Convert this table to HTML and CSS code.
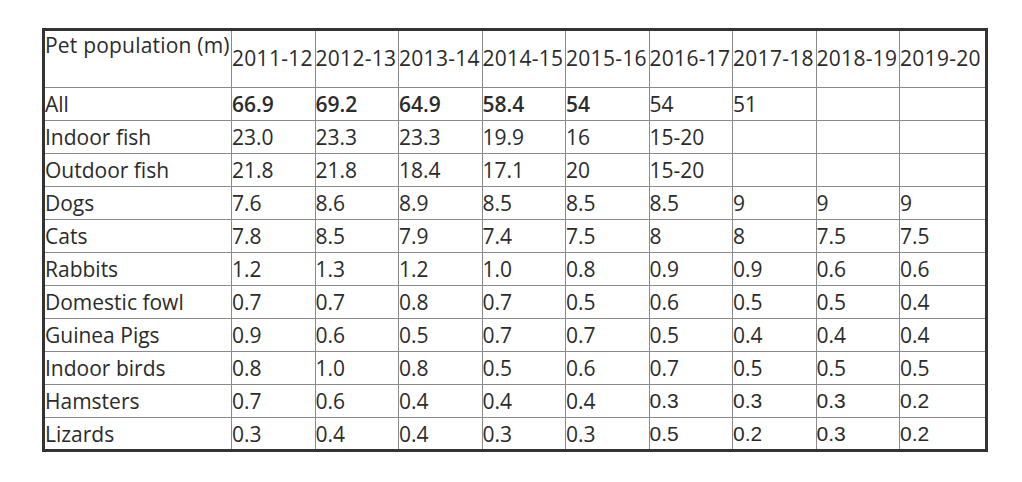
FILE: index.html
```html
<!DOCTYPE html>
<html lang="en">
<head>
    <meta charset="UTF-8">
    <title>Pet population</title>
    <link rel="stylesheet" href="styles.css">
</head>
<body>

    <!-- Pet population table -->
    <table class="pets">
        <colgroup>
            <col class="c-name">
            <col class="c-year"><col class="c-year"><col class="c-year">
            <col class="c-year"><col class="c-year"><col class="c-year">
            <col class="c-year"><col class="c-year"><col class="c-last">
        </colgroup>
        <tr class="head">
            <th class="title">Pet population (m)</th>
            <th>2011-12</th><th>2012-13</th><th>2013-14</th><th>2014-15</th><th>2015-16</th><th>2016-17</th><th>2017-18</th><th>2018-19</th><th>2019-20</th>
        </tr>
        <tr class="total">
            <td>All</td>
            <td class="b">66.9</td><td class="b">69.2</td><td class="b">64.9</td><td class="b">58.4</td><td class="b">54</td><td>54</td><td>51</td><td></td><td></td>
        </tr>
        <tr><td>Indoor fish</td><td>23.0</td><td>23.3</td><td>23.3</td><td>19.9</td><td>16</td><td>15-20</td><td></td><td></td><td></td></tr>
        <tr><td>Outdoor fish</td><td>21.8</td><td>21.8</td><td>18.4</td><td>17.1</td><td>20</td><td>15-20</td><td></td><td></td><td></td></tr>
        <tr><td>Dogs</td><td>7.6</td><td>8.6</td><td>8.9</td><td>8.5</td><td>8.5</td><td>8.5</td><td>9</td><td>9</td><td>9</td></tr>
        <tr><td>Cats</td><td>7.8</td><td>8.5</td><td>7.9</td><td>7.4</td><td>7.5</td><td>8</td><td>8</td><td>7.5</td><td>7.5</td></tr>
        <tr><td>Rabbits</td><td>1.2</td><td>1.3</td><td>1.2</td><td>1.0</td><td>0.8</td><td>0.9</td><td>0.9</td><td>0.6</td><td>0.6</td></tr>
        <tr><td>Domestic fowl</td><td>0.7</td><td>0.7</td><td>0.8</td><td>0.7</td><td>0.5</td><td>0.6</td><td>0.5</td><td>0.5</td><td>0.4</td></tr>
        <tr><td>Guinea Pigs</td><td>0.9</td><td>0.6</td><td>0.5</td><td>0.7</td><td>0.7</td><td>0.5</td><td>0.4</td><td>0.4</td><td>0.4</td></tr>
        <tr><td>Indoor birds</td><td>0.8</td><td>1.0</td><td>0.8</td><td>0.5</td><td>0.6</td><td>0.7</td><td>0.5</td><td>0.5</td><td>0.5</td></tr>
        <tr><td>Hamsters</td><td>0.7</td><td>0.6</td><td>0.4</td><td>0.4</td><td>0.4</td><td class="alt">0.3</td><td class="alt">0.3</td><td class="alt">0.3</td><td class="alt">0.2</td></tr>
        <tr><td>Lizards</td><td>0.3</td><td>0.4</td><td>0.4</td><td>0.3</td><td>0.3</td><td class="alt">0.5</td><td class="alt">0.2</td><td class="alt">0.3</td><td class="alt">0.2</td></tr>
    </table>

</body>
</html>
```

FILE: styles.css
```css
* { margin: 0; padding: 0; box-sizing: border-box; }
body { background: #ffffff; font-family: "Open Sans", Lato, sans-serif; color: #2b2b2b; }

.pets {
    margin: 28px 0 0 42px;
    width: 943px;
    border-collapse: collapse;
    table-layout: fixed;
    border: 3px solid #333333;
    font-size: 21px;
}

.c-name { width: 188px; }
.c-year { width: 83.5px; }
.c-last { width: 87px; }

.pets th,
.pets td {
    border: 1px solid #8a8a8a;
    padding: 0;
    text-align: left;
    font-weight: normal;
    white-space: nowrap;
    overflow: visible;
    line-height: 24px;
}

.pets td { height: 33px; vertical-align: middle; }

.head th { height: 58px; vertical-align: middle; padding-bottom: 3px; letter-spacing: 0.3px; }
.head th.title { vertical-align: top; padding-top: 2px; letter-spacing: 0.2px; }

.pets .b { font-weight: 600; }

.pets .alt { font-family: "Liberation Sans", Arial, sans-serif; }
```
